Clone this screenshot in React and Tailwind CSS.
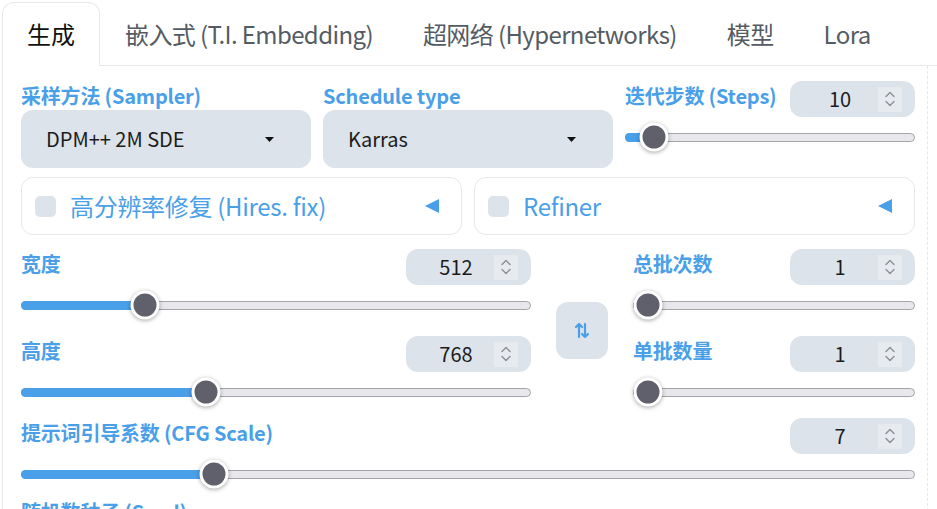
import { useState } from "react";

const tabs = ["生成", "嵌入式 (T.I. Embedding)", "超网络 (Hypernetworks)", "模型", "Lora"];

function Spinner() {
  return (
    <div className="w-[24px] h-[25px] bg-[#e7ebef] flex items-center justify-center">
      <svg width="12" height="18" viewBox="0 0 12 18" fill="none" stroke="#8b8f96" strokeWidth="1.4" strokeLinecap="round" strokeLinejoin="round">
        <path d="M2 6.5 L6 2.5 L10 6.5" />
        <path d="M2 11.5 L6 15.5 L10 11.5" />
      </svg>
    </div>
  );
}

function NumberBox({ value }) {
  return (
    <div className="w-[125px] h-[36px] rounded-[12px] bg-[#dde3ea] flex items-center pr-[13px] shrink-0">
      <div className="flex-1 text-center pl-[12px] text-[20px] leading-none text-[#1c1c1c]">{value}</div>
      <Spinner />
    </div>
  );
}

function Slider({ pct }) {
  return (
    <div className="h-[40px] flex items-center">
      <div className="relative w-full h-[9px] rounded-full bg-[#e8e8ec] border border-[#a3a3ab]">
        <div className="absolute -left-px -top-px h-[9px] rounded-full bg-[#4a9fe9]" style={{ width: `${pct}%` }} />
        <div
          className="absolute top-1/2 w-[29px] h-[29px] -translate-x-1/2 -translate-y-1/2 rounded-full bg-[#60606d] border-[3px] border-white shadow-[0_1px_4px_rgba(0,0,0,0.35)]"
          style={{ left: `${pct}%` }}
        />
      </div>
    </div>
  );
}

function Label({ children }) {
  return <div className="text-[20px] leading-[28px] font-bold tracking-[-0.2px] text-[#4a9fe9]">{children}</div>;
}

function SliderField({ label, value, pct }) {
  return (
    <div>
      <div className="h-[36px] flex items-start justify-between">
        <div className="pt-px">
          <Label>{label}</Label>
        </div>
        <NumberBox value={value} />
      </div>
      <Slider pct={pct} />
    </div>
  );
}

function Select({ label, value }) {
  return (
    <div>
      <div className="h-[29px] flex items-center">
        <Label>{label}</Label>
      </div>
      <div className="h-[58px] rounded-[12px] bg-[#dde3ea] flex items-center justify-between pl-[25px] pr-[37px]">
        <span className="text-[20px] text-[#1c1c1c]">{value}</span>
        <svg width="9" height="5" viewBox="0 0 9 5">
          <path d="M0 0 H9 L4.5 5 Z" fill="#111" />
        </svg>
      </div>
    </div>
  );
}

function Accordion({ title }) {
  return (
    <div className="h-[58px] rounded-[12px] border border-[#e5e7eb] bg-white flex items-center pl-[13px] pr-[21px]">
      <div className="w-[21px] h-[21px] rounded-[5px] bg-[#dde3ea]" />
      <span className="ml-[14px] flex-1 text-[24px] tracking-[-0.3px] text-[#4a9fe9]">{title}</span>
      <svg width="16" height="16" viewBox="0 0 16 16">
        <path d="M1 8 L15 1 V15 Z" fill="#4a9fe9" />
      </svg>
    </div>
  );
}

export default function App() {
  const [active] = useState(0);

  return (
    <div className="w-[937px] h-[509px] overflow-hidden bg-white font-['Noto_Sans_CJK_SC','Noto_Sans',sans-serif]">
      <div className="flex pt-[2px] ml-[2px] border-b border-[#e5e7eb]">
        {tabs.map((t, i) => (
          <div
            key={t}
            className={
              i === active
                ? "-mb-px h-[64px] px-6 flex items-center rounded-t-[12px] border border-[#e5e7eb] border-b-white bg-white text-[24px] text-[#111]"
                : "-mb-px h-[64px] px-6 flex items-center border border-transparent text-[24px] tracking-[-0.6px] text-[#555b63]"
            }
          >
            {t}
          </div>
        ))}
      </div>

      <div className="flex">
        <div className="ml-[2px] w-[925px] h-[460px] border-l border-[#e5e7eb] pl-[18px] pr-[12px] pt-[15px]">
          <div className="grid grid-cols-3 gap-3">
            <Select label="采样方法 (Sampler)" value="DPM++ 2M SDE" />
            <Select label="Schedule type" value="Karras" />
            <SliderField label="迭代步数 (Steps)" value="10" pct={9.7} />
          </div>

          <div className="grid grid-cols-2 gap-3 mt-[9px]">
            <Accordion title="高分辨率修复 (Hires. fix)" />
            <Accordion title="Refiner" />
          </div>

          <div className="flex items-center gap-[25px] mt-[14px]">
            <div className="w-[510px] flex flex-col gap-[11px]">
              <SliderField label="宽度" value="512" pct={24.3} />
              <SliderField label="高度" value="768" pct={36.3} />
            </div>
            <div className="w-[52px] h-[57px] rounded-[12px] bg-[#dde3ea] flex items-center justify-center">
              <svg width="16" height="17" viewBox="0 0 16 17" fill="none" stroke="#4a9fe9" strokeWidth="2.2" strokeLinecap="round" strokeLinejoin="round">
                <path d="M5 15 V2 M2 5 L5 2 L8 5" />
                <path d="M11 2 V15 M8 12 L11 15 L14 12" />
              </svg>
            </div>
            <div className="w-[282px] flex flex-col gap-[11px]">
              <SliderField label="总批次数" value="1" pct={5} />
              <SliderField label="单批数量" value="1" pct={5} />
            </div>
          </div>

          <div className="mt-[6px]">
            <SliderField label="提示词引导系数 (CFG Scale)" value="7" pct={21.5} />
          </div>

          <div className="mt-[4px]">
            <Label>随机数种子 (Seed)</Label>
          </div>
        </div>
        <div className="h-[460px] border-l border-dashed border-[#e5e7eb]" />
      </div>
    </div>
  );
}
